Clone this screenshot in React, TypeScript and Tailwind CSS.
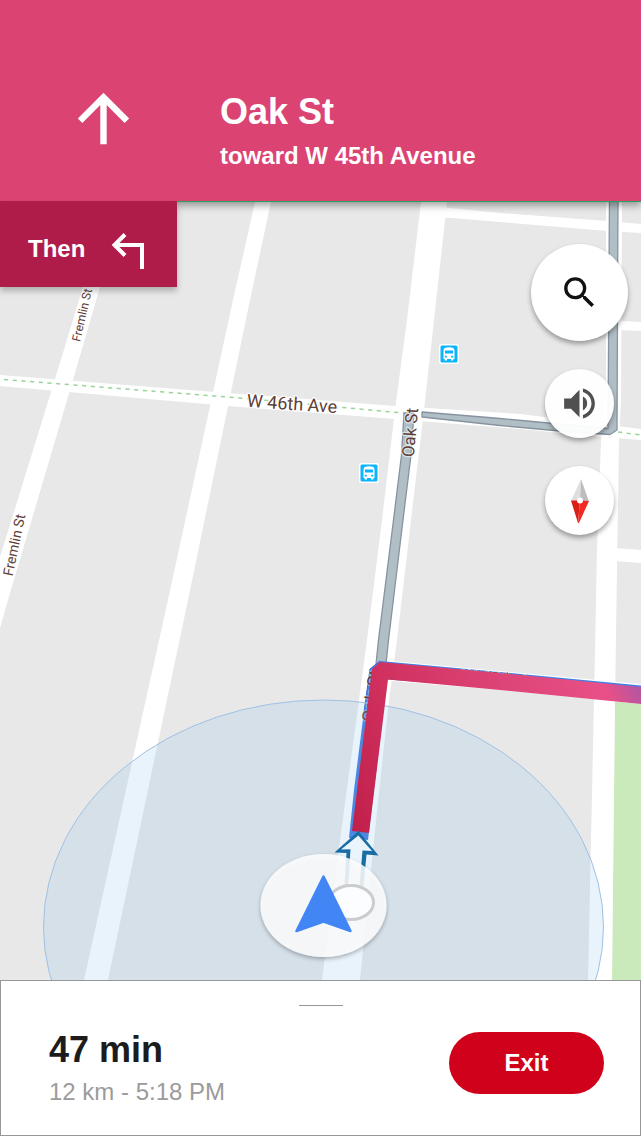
import React from "react";
import { MdArrowUpward, MdSearch, MdVolumeUp } from "react-icons/md";

function TurnLeftIcon() {
  return (
    <svg viewBox="0 -4 34 42" className="h-[42px] w-[34px] shrink-0" fill="none" stroke="currentColor" strokeWidth="4" aria-hidden="true">
      <path d="M14 2.500 3.500 13 14 23.500M3 13H31V37" />
    </svg>
  );
}

function CompassIcon() {
  return (
    <svg viewBox="0 0 20 46" className="h-[46px] w-5" aria-hidden="true">
      <path d="M11 1 1 23H10z" fill="#dedede" />
      <path d="M11 1 19 23.500 10 23z" fill="#bdbdbd" />
      <path d="M1 22.500H10L8 45z" fill="#d91d17" />
      <path d="M10 22.500 19 23 9 45H8z" fill="#f12a24" />
      <circle cx="10" cy="22.500" r="3" fill="#fff" />
    </svg>
  );
}

function BusStop({ x, y }: { x: number; y: number }) {
  return (
    <g transform={`translate(${x} ${y})`}>
      <rect x="-10" y="-10" width="20" height="20" rx="2.500" fill="#fff" />
      <rect x="-8.500" y="-8.500" width="17" height="17" rx="1.500" fill="#0bb4fb" />
      <path d="M-5.500 5V-3.500Q-5.500-6.800 0-6.800T5.500-3.500V5H4.300V6.500H2V5H-2V6.500H-4.300V5z" fill="#fff" />
      <path d="M-4-3.500H4V-0.500H-4zM-4.200 1.800H-2.200V3.500H-4.200zM2.200 1.800H4.200V3.500H2.200z" fill="#0bb4fb" />
    </g>
  );
}

function StreetMap() {
  return (
    <svg
      viewBox="0 202 641 778"
      preserveAspectRatio="xMidYMid slice"
      className="absolute inset-0 h-full w-full bg-[#e8e8e8]"
      role="img"
      aria-label="Map"
    >
      <defs>
        <linearGradient id="route" gradientUnits="userSpaceOnUse" x1="355" y1="830" x2="641" y2="690">
          <stop offset="0" stopColor="#c1204a" />
          <stop offset="0.29" stopColor="#d0315f" />
          <stop offset="0.62" stopColor="#dd4477" />
          <stop offset="0.9" stopColor="#e85087" />
          <stop offset="1" stopColor="#b356a3" />
        </linearGradient>
        <filter id="discShadow" x="-20%" y="-20%" width="140%" height="140%">
          <feDropShadow dx="0" dy="2" stdDeviation="2" floodColor="#000" floodOpacity="0.35" />
        </filter>
      </defs>

      <path d="M615 690H641V980H612z" fill="#cbeabc" />

      <g fill="#fff">
        <path d="M108 202H125L100 287 73 380 8 600 0 628V557L51 392 83 287z" />
        <path d="M255 202H271L250 300 188 600 169 690 108 980H84L148 690 168 600 233 300z" />
        <path d="M421 202H447L434 320 424 410 411 520 397 640 389 700 374 840 360 980H322L340 840 359 700 367 640 382 520 395 410 407 320z" />
        <path d="M606 202H622L621 400 619 440 615 700 612 980H588L594 700 597 550 601 440 606 380z" />
        <path d="M0 375 240 394 395 406 520 414 641 429V440L602 437 520 429 395 419 240 407 0 386z" />
        <path d="M440 207 500 213 607 221 641 224V233L607 231 500 222 440 217z" />
        <path d="M620 321 641 322V331L620 330z" />
        <path d="M615 548 641 550V563L615 561z" />
        <path d="M380 660 500 671 641 684V704L500 690 380 680z" />
      </g>

      <path d="M4 379.500 240 398 408 413.500M618 432 641 435" fill="none" stroke="#9bd49b" strokeWidth="1.500" strokeDasharray="4.200 4.500" />

      <g fill="#b0bec5" stroke="#8793a0" strokeWidth="1.300" strokeLinejoin="round">
        <path d="M422 412 500 418.500 608 428.500 609.500 195H618L617 430 610 434.500 560 431 500 425.500 422 417z" />
        <path d="M404 413H414L411 455 403 520 388.500 640 386 664H376L378.500 640 393.500 520 401.500 455z" />
      </g>

      <path d="M349 838 354 790 363 719 370 669 380 661 500 672 641 685.500V700L500 688 387 679.500 368 840z" fill="#437fe3" />
      <path d="M363 719 370 669 380 661" fill="none" stroke="#3567d0" />

      <g fill="#5d4037" stroke="#fff" strokeWidth="2.500" paintOrder="stroke" strokeLinejoin="round" fontFamily="Roboto, sans-serif" textAnchor="middle">
        <text x="292" y="410" fontSize="18" transform="rotate(4 292 404)">W 46th Ave</text>
        <text fontSize="12" strokeWidth="1" transform="translate(86 316) rotate(-77)">Fremlin St</text>
        <text fontSize="14" strokeWidth="1" transform="translate(19 546) rotate(-78)">Fremlin St</text>
        <text fontSize="17" strokeOpacity="0.6" transform="translate(416 433) rotate(-85)">Oak St</text>
        <text fontSize="18" strokeOpacity="0.4" transform="translate(378 697) rotate(-82)">Oak St</text>
        <text fontSize="17" strokeWidth="1" transform="translate(503 685) rotate(5)">W 45th Ave</text>
      </g>

      <BusStop x={449} y={354} />
      <BusStop x={369} y={473} />

      <ellipse cx="323.500" cy="927" rx="280" ry="227" fill="#78b8ed" fillOpacity="0.17" stroke="#9fc2e5" />

      <path d="M352 831 372 669 380 662 500 673 641 687V704L500 690 388 679.500 369 833z" fill="url(#route)" />

      <path d="M358.500 831 378.500 855.500 366.500 854.500 363.500 886H344.500L346.500 853 334.500 852.500z" fill="#176da4" />
      <path d="M358.300 835.500 372 851 362.500 850.500 359.500 886H348L350.500 849.300 341 849.500z" fill="#eaf4fd" />

      <ellipse cx="323.500" cy="905.500" rx="63" ry="51.500" fill="#fff" fillOpacity="0.84" filter="url(#discShadow)" />
      <ellipse cx="351" cy="902.500" rx="22.500" ry="17" fill="#fcfdfe" stroke="#cbcccd" strokeWidth="3" />
      <path d="M323.500 876.500 350.500 931 323.500 921.500 296.500 931z" fill="#4285f4" stroke="#4285f4" strokeWidth="2.500" strokeLinejoin="round" />
    </svg>
  );
}

export default function App() {
  return (
    <div className="flex min-h-screen flex-col bg-white font-['Liberation_Sans',Arial,sans-serif]">
      <header className="relative z-10 flex items-start border-b border-[#2ba25a] bg-[#db4373] pb-[25px] pt-20 text-white shadow-[0_3px_8px_rgba(0,0,0,0.4)]">
        <div className="flex w-[220px] shrink-0 pl-[65px]">
          <MdArrowUpward className="size-[77px]" aria-hidden="true" />
        </div>
        <div className="min-w-0 pt-2 font-bold">
          <h1 className="text-[36px] leading-[48px]">Oak St</h1>
          <p className="text-2xl leading-10">toward W 45th Avenue</p>
        </div>
      </header>

      <main className="relative flex flex-1 items-start justify-between">
        <StreetMap />
        <div className="relative z-20 -mt-px flex h-[86px] w-[177px] items-center gap-[26px] bg-[#b01c4a] pl-7 pt-2.5 text-white shadow-[0_4px_6px_rgba(0,0,0,0.25)]">
          <span className="text-2xl font-bold">Then</span>
          <TurnLeftIcon />
        </div>
        <div className="relative flex flex-col items-center gap-7 pr-[13px] pt-[42px]">
          <button type="button" aria-label="Search" className="flex size-[97px] items-center justify-center rounded-full bg-white text-[#111] shadow-[0_3px_5px_rgba(0,0,0,0.35)]">
            <MdSearch className="size-[41px]" />
          </button>
          <button type="button" aria-label="Sound" className="flex size-[69px] items-center justify-center rounded-full bg-white/95 text-[#505050] shadow-[0_3px_5px_rgba(0,0,0,0.35)]">
            <MdVolumeUp className="size-[41px]" />
          </button>
          <button type="button" aria-label="Compass" className="flex size-[69px] items-center justify-center rounded-full bg-white shadow-[0_3px_5px_rgba(0,0,0,0.35)]">
            <CompassIcon />
          </button>
        </div>
      </main>

      <footer className="border border-[#979797] bg-white pb-[25px] pt-6">
        <div className="mx-auto h-px w-11 bg-[#979797]" />
        <div className="flex items-start justify-between pl-12 pr-9 pt-5">
          <div>
            <p className="text-[36px] font-bold leading-[48px] text-[#1c1c1c]">47 min</p>
            <p className="text-2xl leading-9 text-[#9b9b9b]">12 km - 5:18 PM</p>
          </div>
          <button type="button" className="mt-1.5 h-[62px] w-[155px] rounded-full bg-[#d0021b] text-2xl font-bold text-white">
            Exit
          </button>
        </div>
      </footer>
    </div>
  );
}
